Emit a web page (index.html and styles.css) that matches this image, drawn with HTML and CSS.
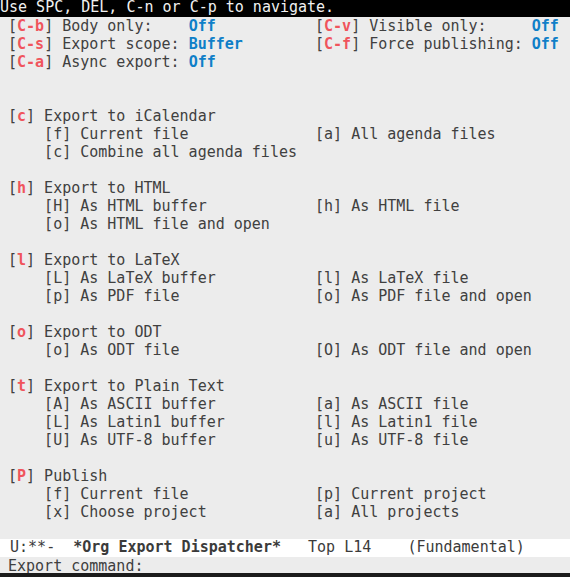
FILE: index.html
```html
<!DOCTYPE html>
<html>
<head>
<meta charset="utf-8">
<link rel="stylesheet" href="styles.css">
</head>
<body>
<div class="frame">
  <div class="header">Use SPC, DEL, C-n or C-p to navigate.</div>
  <div class="buffer">
    <div class="pair"><span>[<b class="k">C-b</b>] Body only:    <b class="v">Off</b></span><span>[<b class="k">C-v</b>] Visible only:     <b class="v">Off</b></span></div>
    <div class="pair"><span>[<b class="k">C-s</b>] Export scope: <b class="v">Buffer</b></span><span>[<b class="k">C-f</b>] Force publishing: <b class="v">Off</b></span></div>
    <div class="line">[<b class="k">C-a</b>] Async export: <b class="v">Off</b></div>
    <div class="blank"></div>
    <div class="blank"></div>

    <div class="line">[<b class="k">c</b>] Export to iCalendar</div>
    <div class="pair sub"><span>[f] Current file</span><span>[a] All agenda files</span></div>
    <div class="pair sub"><span>[c] Combine all agenda files</span><span></span></div>
    <div class="blank"></div>

    <div class="line">[<b class="k">h</b>] Export to HTML</div>
    <div class="pair sub"><span>[H] As HTML buffer</span><span>[h] As HTML file</span></div>
    <div class="pair sub"><span>[o] As HTML file and open</span><span></span></div>
    <div class="blank"></div>

    <div class="line">[<b class="k">l</b>] Export to LaTeX</div>
    <div class="pair sub"><span>[L] As LaTeX buffer</span><span>[l] As LaTeX file</span></div>
    <div class="pair sub"><span>[p] As PDF file</span><span>[o] As PDF file and open</span></div>
    <div class="blank"></div>

    <div class="line">[<b class="k">o</b>] Export to ODT</div>
    <div class="pair sub"><span>[o] As ODT file</span><span>[O] As ODT file and open</span></div>
    <div class="blank"></div>

    <div class="line">[<b class="k">t</b>] Export to Plain Text</div>
    <div class="pair sub"><span>[A] As ASCII buffer</span><span>[a] As ASCII file</span></div>
    <div class="pair sub"><span>[L] As Latin1 buffer</span><span>[l] As Latin1 file</span></div>
    <div class="pair sub"><span>[U] As UTF-8 buffer</span><span>[u] As UTF-8 file</span></div>
    <div class="blank"></div>

    <div class="line">[<b class="k">P</b>] Publish</div>
    <div class="pair sub"><span>[f] Current file</span><span>[p] Current project</span></div>
    <div class="pair sub"><span>[x] Choose project</span><span>[a] All projects</span></div>
    <div class="blank"></div>
  </div>
  <div class="modeline"> U:**-  <b>*Org Export Dispatcher*</b>   Top L14    (Fundamental)</div>
  <div class="echo">Export command: </div>
  <div class="bottom"></div>
</div>
</body>
</html>
```
FILE: styles.css
```css
html, body {
  margin: 0;
  padding: 0;
  background: #1b1b1b;
}

.frame {
  width: 570px;
  height: 577px;
  display: flex;
  flex-direction: column;
  overflow: hidden;
  background: #ececec;
  color: #404040;
  font-family: "DejaVu Sans Mono", monospace;
  font-size: 15px;
}

.header {
  flex: none;
  height: 14px;
  padding-bottom: 3px;
  line-height: 14px;
  background: #000;
  color: #f0f0f0;
  white-space: pre;
}

.buffer {
  flex: none;
  height: 522px;
  padding-left: 8px;
  line-height: 18px;
}

.line,
.pair,
.blank {
  height: 18px;
}

.line,
.pair > span {
  white-space: pre;
}

.pair {
  display: grid;
  grid-template-columns: 34ch 1fr;
}

.pair.sub > span:first-child {
  padding-left: 4ch;
}

b {
  font-weight: bold;
}

.k {
  color: #f0545c;
}

.v {
  color: #0f7fc8;
}

.modeline {
  flex: none;
  height: 18px;
  line-height: 16px;
  background: #ffffff;
  color: #3b3b3b;
  white-space: pre;
  padding-left: 1px;
}

.echo {
  flex: none;
  height: 16px;
  line-height: 18px;
  padding-left: 8px;
  white-space: pre;
  overflow: hidden;
}

.bottom {
  flex: 1;
  background: #1b1b1b;
}
```
